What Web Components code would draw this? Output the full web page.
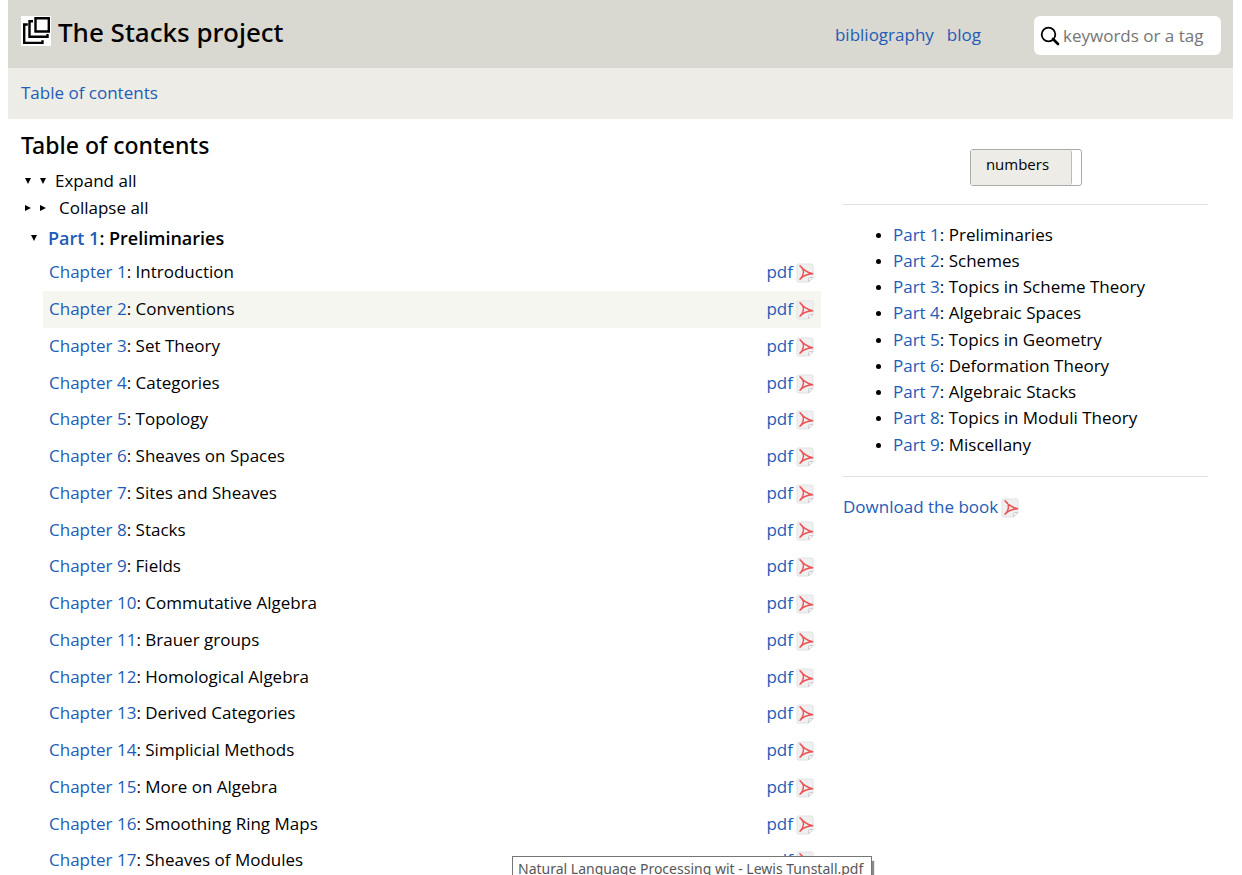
<!DOCTYPE html>
<html lang="en">
<head>
<meta charset="utf-8">
<title>Table of contents — The Stacks project</title>
<style>
  :root {
    --link: #225cb7;
    --bar: #d9d8d1;
    --subbar: #edece6;
    --stripe: #f6f6f0;
    --rule: #e1e1e1;
  }
  html { overflow-x: hidden; }
  body {
    margin: 0 9px 0 8px;
    background: #fff;
    color: #000;
    font: 17px/26px "Open Sans", "Noto Sans", sans-serif;
  }
</style>
</head>
<body>
<stacks-page></stacks-page>

<template id="t-page">
  <style>
    :host { display: block; }
    main {
      display: grid;
      grid-template-columns: 800fr 365fr;
      column-gap: 22px;
      align-items: start;
      padding: 0 25px 0 13px;
    }
  </style>
  <site-header></site-header>
  <bread-crumbs><a href="#toc">Table of contents</a></bread-crumbs>
  <main>
    <toc-tree></toc-tree>
    <toc-aside></toc-aside>
  </main>
  <file-tip>Natural Language Processing wit - Lewis Tunstall.pdf</file-tip>
</template>

<template id="t-header">
  <style>
    :host {
      display: flex;
      align-items: flex-start;
      height: 68px;
      box-sizing: border-box;
      padding: 16px 12px 0 13px;
      background: var(--bar);
    }
    h1 { margin: 0; flex: 1; font: 500 26px/32px "Noto Sans", sans-serif; }
    h1 a { display: flex; gap: 7px; color: #000; text-decoration: none; }
    svg { display: block; flex: none; }
    nav { display: flex; gap: 13px; margin-right: 53px; padding-top: 6px; }
    nav a { color: var(--link); text-decoration: none; }
    form {
      display: flex;
      align-items: center;
      gap: 3px;
      box-sizing: border-box;
      width: 187px;
      height: 39px;
      padding: 0 6px;
      border-radius: 6px;
      background: #fff;
    }
    input {
      flex: 1;
      min-width: 0;
      padding: 0;
      border: 0;
      outline: 0;
      background: none;
      font: inherit;
    }
    input::placeholder { color: #757575; opacity: 1; }
  </style>
  <h1><a href="#home">
    <svg width="30" height="30" viewBox="0 0 30 30" aria-hidden="true">
      <path fill="#fff" d="M0 0h30v30H0z"/>
      <g fill="none" stroke="#000" stroke-width="2.400">
        <path d="M14.500 2.200h13.300v13.300H14.500z"/>
        <path d="M12 5.200H8.500v15.600H26.500v-2.800"/>
        <path d="M6.800 8.500H3.200v18.400H21.500v-2.700"/>
      </g>
    </svg>
    <span>The Stacks project</span></a></h1>
  <nav><a href="#bibliography">bibliography</a><a href="#blog">blog</a></nav>
  <form role="search">
    <svg width="20" height="20" viewBox="0 0 20 20" aria-hidden="true">
      <circle cx="8.500" cy="8.500" r="6.800" fill="none" stroke="#000" stroke-width="1.800"/>
      <path d="M13 13l5 5" stroke="#000" stroke-width="2.600" stroke-linecap="round"/>
    </svg>
    <input type="text" aria-label="Search" placeholder="keywords or a tag">
  </form>
</template>

<template id="t-crumbs">
  <style>
    :host { display: block; padding: 12px 13px 13px; background: var(--subbar); }
    ::slotted(a) { color: var(--link); text-decoration: none; }
  </style>
  <slot></slot>
</template>

<template id="t-pdf">
  <style>
    :host { display: inline-block; }
    a { display: flex; align-items: center; gap: 3px; color: var(--link); text-decoration: none; }
    svg { display: block; margin-top: 2px; }
  </style>
  <a href="#pdf"><slot>pdf</slot>
    <svg width="18" height="20" viewBox="0 0 18 20" aria-hidden="true">
      <path fill="#f0f0f0" stroke="#e2e2e2" d="M2.500 1h13a1.500 1.500 0 0 1 1.500 1.500v12l-4.500 4.500h-10a1.500 1.500 0 0 1-1.500-1.500v-15a1.500 1.500 0 0 1 1.500-1.500z"/>
      <path fill="#fafafa" stroke="#cfcfcf" d="M12.500 19v-3a1.500 1.500 0 0 1 1.500-1.500h3z"/>
      <path fill="none" stroke="#ea5558" stroke-width="1.500" stroke-linecap="round" stroke-linejoin="round" d="M4 2.800c2.200 3 6 6.200 12.600 8C11.500 11 7.500 12.500 4 16.200C7.500 12.500 8.300 8 6 4.500"/>
    </svg></a>
</template>

<template id="t-tree">
  <style>
    :host { display: block; padding-top: 10px; }
    h2 { margin: 0; font: 500 23px/32px "Noto Sans", sans-serif; }
    button {
      display: flex;
      align-items: center;
      height: 27px;
      padding: 0 3px;
      border: 0;
      background: none;
      color: inherit;
      font: inherit;
    }
    .marks { display: flex; gap: 7px; margin-right: 8px; }
    .side { margin-right: 12px; }
    svg { display: block; }
    .tools { padding-top: 6px; }
    h3 { display: flex; align-items: center; margin: 0; padding: 4px 0 4px 9px; font-size: 18px; line-height: 26px; font-weight: 600; }
    h3 svg { margin-right: 10px; }
    h3 a { color: var(--link); text-decoration: none; }
    ol { margin: 0 0 0 22px; padding: 0; list-style: none; }
    li.active { background: var(--stripe); }
    /* Row rhythm: 147px for every four rows. */
    li:nth-child(4n+1) chapter-row { height: 36px; }
  </style>
  <h2>Table of contents</h2>
  <div class="tools">
    <button type="button"><span class="marks"><svg width="8" height="8"><path d="M1 1h6L4 7z"/></svg><svg width="8" height="8"><path d="M1 1h6L4 7z"/></svg></span>Expand all</button>
    <button type="button"><span class="marks side"><svg width="8" height="8"><path d="M1 1v6l6-3z"/></svg><svg width="8" height="8"><path d="M1 1v6l6-3z"/></svg></span>Collapse all</button>
  </div>
  <h3><svg width="8" height="8"><path d="M1 1h6L4 7z"/></svg><span><a href="#part-1">Part 1</a>: Preliminaries</span></h3>
  <ol></ol>
</template>

<template id="t-row">
  <style>
    :host { display: flex; justify-content: space-between; align-items: center; height: 37px; box-sizing: border-box; padding: 0 7px 2px 6px; }
    a { color: var(--link); text-decoration: none; }
  </style>
  <span><a href="#chapter"></a>: <slot></slot></span>
  <pdf-link></pdf-link>
</template>

<template id="t-aside">
  <style>
    :host { display: block; padding-top: 30px; }
    button {
      display: flex;
      width: 112px;
      height: 37px;
      margin: 0 auto;
      padding: 0;
      border: 1px solid #aaa;
      border-radius: 3px;
      background: #fff;
      color: #000;
      font: inherit;
      font-size: 15px;
      line-height: 28px;
    }
    button span { flex: 1; align-self: stretch; margin-right: 9px; padding-right: 6px; border-right: 1px solid #bbb; border-radius: 0 3px 3px 0; background: var(--subbar); }
    hr { height: 1px; margin: 18px 0 17px; border: 0; background: var(--rule); }
    ul { margin: 0; padding: 0 0 0 50px; }
    li { height: 26px; }
    li::marker { font-size: 14px; }
    li:nth-child(4n) { height: 27px; }
    a { color: var(--link); text-decoration: none; }
  </style>
  <button type="button" role="switch" aria-checked="true"><span>numbers</span></button>
  <hr>
  <ul></ul>
  <hr>
  <pdf-link>Download the book</pdf-link>
</template>

<template id="t-tip">
  <style>
    :host {
      position: absolute;
      left: 512px;
      top: 856px;
      box-sizing: border-box;
      width: 360px;
      padding: 0 5px;
      border: 1px solid #767676;
      background: #fff;
      box-shadow: 2px 5px 1px #888;
      color: #575757;
      font-family: "Noto Sans", sans-serif;
      font-size: 14px;
      line-height: 24px;
      white-space: nowrap;
    }
  </style>
  <slot></slot>
</template>

<script>
  class Templated extends HTMLElement {
    constructor() {
      super();
      const root = this.attachShadow({ mode: 'open' });
      root.append(document.getElementById(this.constructor.template).content.cloneNode(true));
    }
  }

  const PARTS = ['Preliminaries', 'Schemes', 'Topics in Scheme Theory', 'Algebraic Spaces',
    'Topics in Geometry', 'Deformation Theory', 'Algebraic Stacks', 'Topics in Moduli Theory', 'Miscellany'];
  const CHAPTERS = ['Introduction', 'Conventions', 'Set Theory', 'Categories', 'Topology',
    'Sheaves on Spaces', 'Sites and Sheaves', 'Stacks', 'Fields', 'Commutative Algebra', 'Brauer groups',
    'Homological Algebra', 'Derived Categories', 'Simplicial Methods', 'More on Algebra',
    'Smoothing Ring Maps', 'Sheaves of Modules'];

  customElements.define('pdf-link', class extends Templated { static template = 't-pdf'; });
  customElements.define('bread-crumbs', class extends Templated { static template = 't-crumbs'; });
  customElements.define('file-tip', class extends Templated { static template = 't-tip'; });
  customElements.define('site-header', class extends Templated { static template = 't-header'; });

  customElements.define('chapter-row', class extends Templated {
    static template = 't-row';
    connectedCallback() {
      const a = this.shadowRoot.querySelector('a');
      a.textContent = 'Chapter ' + this.getAttribute('number');
      a.href = '#chapter-' + this.getAttribute('number');
    }
  });

  customElements.define('toc-tree', class extends Templated {
    static template = 't-tree';
    connectedCallback() {
      this.shadowRoot.querySelector('ol').append(...CHAPTERS.map((title, i) => {
        const li = document.createElement('li');
        const row = document.createElement('chapter-row');
        row.setAttribute('number', i + 1);
        row.textContent = title;
        if (i === 1) li.className = 'active';
        li.append(row);
        return li;
      }));
    }
  });

  customElements.define('toc-aside', class extends Templated {
    static template = 't-aside';
    connectedCallback() {
      this.shadowRoot.querySelector('ul').append(...PARTS.map((title, i) => {
        const li = document.createElement('li');
        const a = document.createElement('a');
        a.href = '#part-' + (i + 1);
        a.textContent = 'Part ' + (i + 1);
        li.append(a, ': ' + title);
        return li;
      }));
    }
  });

  customElements.define('stacks-page', class extends Templated { static template = 't-page'; });
</script>
</body>
</html>
